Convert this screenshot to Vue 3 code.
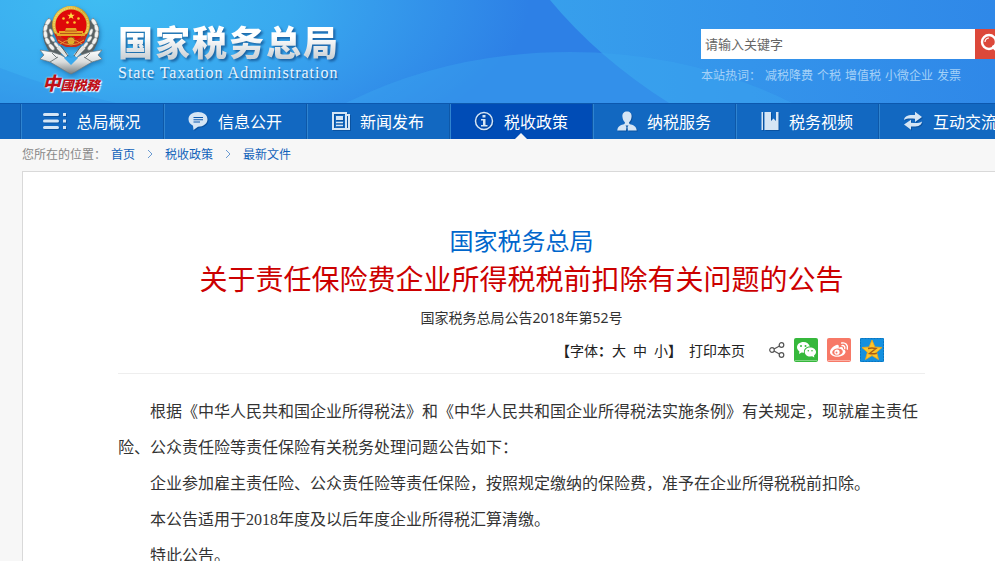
<script setup>
const navItems = [
  { label: '总局概况', icon: 'list' },
  { label: '信息公开', icon: 'chat' },
  { label: '新闻发布', icon: 'news' },
  { label: '税收政策', icon: 'info', active: true },
  { label: '纳税服务', icon: 'user' },
  { label: '税务视频', icon: 'book' },
  { label: '互动交流', icon: 'sync' },
]
const hotWords = ['减税降费', '个税', '增值税', '小微企业', '发票']
const crumbs = ['首页', '税收政策', '最新文件']
const sizes = ['大', '中', '小']
const paragraphs = [
  '根据《中华人民共和国企业所得税法》和《中华人民共和国企业所得税法实施条例》有关规定，现就雇主责任险、公众责任险等责任保险有关税务处理问题公告如下：',
  '企业参加雇主责任险、公众责任险等责任保险，按照规定缴纳的保险费，准予在企业所得税税前扣除。',
  '本公告适用于2018年度及以后年度企业所得税汇算清缴。',
  '特此公告。',
]
</script>

<template>
  <div class="page">
    <header class="banner">
      <svg class="waves" viewBox="0 0 995 103" preserveAspectRatio="none" aria-hidden="true">
        <defs>
          <linearGradient id="right" x1="0" y1="0" x2="1" y2="0">
            <stop offset="0" stop-color="#379fec" />
            <stop offset=".45" stop-color="#3494eb" />
            <stop offset="1" stop-color="#2f88e8" />
          </linearGradient>
        </defs>
        <path d="M550 0Q598 58 669 103H995V0Z" fill="url(#right)" />
        <path d="M350 101Q450 52 570 52Q690 52 792 103H346Z" fill="#3ba8f0" fill-opacity=".4" />
        <path d="M0 68Q60 91 116 103H0Z" fill="#2c86e5" fill-opacity=".25" />
      </svg>
      <a class="brand" href="#">
        <span class="badge">
          <svg class="emblem" width="66" height="70" viewBox="0 0 66 70" aria-hidden="true">
            <defs>
              <linearGradient id="silver" x1="0" y1="0" x2="0" y2="1">
                <stop offset="0" stop-color="#fff" />
                <stop offset=".5" stop-color="#d9dcdc" />
                <stop offset="1" stop-color="#777e80" />
              </linearGradient>
              <linearGradient id="gold" x1="0" y1="0" x2="1" y2="1">
                <stop offset="0" stop-color="#f7df65" />
                <stop offset=".5" stop-color="#d3a62f" />
                <stop offset="1" stop-color="#f0ce4c" />
              </linearGradient>
            </defs>
            <path d="M14 16C6 24 8 38 21 51M52 16C60 24 58 38 45 51" fill="none" stroke="#596264" stroke-width="9" />
            <g fill="#f3f3f0" stroke="#7b8486" stroke-width=".4">
              <ellipse cx="10" cy="17" rx="2" ry="3.800" transform="rotate(35 10 17)" />
              <ellipse cx="7.500" cy="23" rx="2" ry="3.800" transform="rotate(15 7.500 23)" />
              <ellipse cx="7.500" cy="29.500" rx="2" ry="3.800" transform="rotate(-8 7.500 29.500)" />
              <ellipse cx="9.500" cy="36" rx="2" ry="3.800" transform="rotate(-28 9.500 36)" />
              <ellipse cx="13.500" cy="42" rx="2" ry="3.800" transform="rotate(-40 13.500 42)" />
              <ellipse cx="13" cy="27" rx="1.600" ry="3.400" transform="rotate(-20 13 27)" />
              <ellipse cx="14.500" cy="34" rx="1.600" ry="3.400" transform="rotate(-35 14.500 34)" />
              <ellipse cx="18.500" cy="40" rx="1.600" ry="3.400" transform="rotate(-40 18.500 40)" />
              <ellipse cx="56" cy="17" rx="2" ry="3.800" transform="rotate(-35 56 17)" />
              <ellipse cx="58.500" cy="23" rx="2" ry="3.800" transform="rotate(-15 58.500 23)" />
              <ellipse cx="58.500" cy="29.500" rx="2" ry="3.800" transform="rotate(8 58.500 29.500)" />
              <ellipse cx="56.500" cy="36" rx="2" ry="3.800" transform="rotate(28 56.500 36)" />
              <ellipse cx="52.500" cy="42" rx="2" ry="3.800" transform="rotate(40 52.500 42)" />
              <ellipse cx="53" cy="27" rx="1.600" ry="3.400" transform="rotate(20 53 27)" />
              <ellipse cx="51.500" cy="34" rx="1.600" ry="3.400" transform="rotate(35 51.500 34)" />
              <ellipse cx="47.500" cy="40" rx="1.600" ry="3.400" transform="rotate(40 47.500 40)" />
            </g>
            <path d="M20 42L29 51M46 42L37 51" stroke="#e3e4e0" stroke-width="4" />
            <path d="M23 41L30 51M43 41L36 51" stroke="#555e60" stroke-width="1" />
            <path d="M2 45L14 47L23 50C27 52 30 55 33 59C36 55 39 52 43 50L52 47L64 45L60 50L64 54L54 57L37 67L33 69L29 67L12 57L2 54L6 50Z" fill="url(#silver)" stroke="#6e787b" stroke-width=".7" />
            <path d="M26 53Q30 51 33 53Q36 51 40 53L33 60Z" fill="#3aa9ed" />
            <path d="M12 57L20 52M54 57L46 52M14 48L19 53M52 48L47 53" stroke="#777f80" />
            <circle cx="33" cy="20" r="19" fill="#ad842c" />
            <circle cx="33" cy="19.500" r="18.500" fill="url(#gold)" />
            <circle cx="33" cy="20" r="17" fill="none" stroke="#f9e77d" stroke-dasharray="1 1.500" />
            <path d="M16 28Q33 39 50 28L46 38L38 42H28L20 38Z" fill="#c72b18" />
            <circle cx="33" cy="20" r="15.500" fill="#df0909" />
            <circle cx="33" cy="36" r="4" fill="#e0af2b" stroke="#9b581b" />
            <path d="M20 35Q33 45 46 35M22 39Q33 31 44 39" fill="none" stroke="#ec9935" />
            <path d="M33 7L34 9.700H36.700L34.600 11.500L35.500 14L33 12.500L30.500 14L31.400 11.500L29.300 9.700H32Z" fill="#ffdd42" />
            <circle cx="25.500" cy="13.500" r="1.300" fill="#ffc832" />
            <circle cx="40.500" cy="13.500" r="1.300" fill="#ffc832" />
            <circle cx="29.500" cy="17.500" r="1.300" fill="#ffc832" />
            <circle cx="36.500" cy="17.500" r="1.300" fill="#ffc832" />
            <path d="M28 23H38L39 26H45V28H47V31H19V28H21V26H27Z" fill="#e9a526" />
            <path d="M27 26H39M22 28.500H44" stroke="#b9501a" />
          </svg>
          <span class="script"><b>中</b>國税務</span>
        </span>
        <span class="names">
          <span class="name-cn">国家税务总局</span>
          <span class="name-en">State Taxation Administration</span>
        </span>
      </a>
      <div class="search">
        <form class="search-form" @submit.prevent>
          <input class="search-input" type="text" placeholder="请输入关键字" aria-label="请输入关键字" />
          <button class="search-button" type="submit" aria-label="搜索">
            <svg width="24" height="24" viewBox="0 0 24 24" fill="none" stroke="#fff">
              <circle cx="9" cy="9" r="7" stroke-width="2.4" />
              <path d="M14 14L20 20" stroke-width="4" stroke-linecap="round" />
              <path d="M5 9A4 4 0 0 1 9 5" stroke-width="1.2" />
            </svg>
          </button>
        </form>
        <p class="hot">
          <span>本站热词：</span>
          <a v-for="word in hotWords" :key="word" href="#">{{ word }}</a>
        </p>
      </div>
    </header>

    <nav class="nav">
      <a v-for="item in navItems" :key="item.label" href="#" class="nav-item" :class="{ active: item.active }">
        <svg v-if="item.icon === 'list'" class="icon" width="23" height="20" viewBox="0 0 23 20">
          <path d="M1.500 3.500H14.500M1.500 10H14.500M1.500 16.500H14.500" stroke="currentColor" stroke-width="3" stroke-linecap="round" />
          <path d="M20 2h3v3h-3zM20 8.500h3v3h-3zM20 15h3v3h-3z" fill="currentColor" />
        </svg>
        <svg v-else-if="item.icon === 'chat'" class="icon" width="20" height="20" viewBox="0 0 20 20">
          <path d="M10 1C4.500 1 .5 4 .5 8.300C.5 11.500 2.500 13.500 5 14.700L5.500 19L10 15.800C15.500 15.800 19.500 12.500 19.500 8.300C19.500 4 15.500 1 10 1Z" fill="currentColor" />
          <path d="M5.500 6.500H15M5.500 8.800H15M5.500 11H12" stroke="#0c58ad" stroke-width="1.100" />
        </svg>
        <svg v-else-if="item.icon === 'news'" class="icon" width="18" height="20" viewBox="0 0 18 20" fill="none" stroke="currentColor">
          <path d="M1 2H14V18H1ZM14 4H17V18H12" stroke-width="2" />
          <path d="M4 5H11V9H4Z" fill="currentColor" stroke="none" />
          <path d="M4 11.500H11M4 14.500H11" stroke-width="1.300" />
        </svg>
        <svg v-else-if="item.icon === 'info'" class="icon" width="20" height="20" viewBox="0 0 20 20">
          <circle cx="10" cy="10" r="8.500" fill="none" stroke="currentColor" stroke-width="1.500" />
          <path d="M8.500 4H11.500V6.500H8.500ZM7 8H11.500V14H13.500V15.500H7V14H9V9.500H7Z" fill="currentColor" />
        </svg>
        <svg v-else-if="item.icon === 'user'" class="icon" width="20" height="20" viewBox="0 0 20 20">
          <path d="M10 .5C7 .5 5.200 2.500 5.400 5.500C5.600 8 6.500 10 8 11.500L7.500 13C4 14 .5 15 .3 19.500H9L9.500 16L8.500 14.500H11.500L10.500 16L11 19.500H19.700C19.500 15 16 14 12.500 13L12 11.500C13.500 10 14.400 8 14.600 5.500C14.800 2.500 13 .5 10 .5Z" fill="currentColor" />
        </svg>
        <svg v-else-if="item.icon === 'book'" class="icon" width="18" height="20" viewBox="0 0 18 20">
          <path d="M.5 1H2V19H.5ZM3.500 1H10V10L12.500 7.500L15 10V1H17.500V19H3.500Z" fill="currentColor" />
        </svg>
        <svg v-else class="icon" width="20" height="20" viewBox="0 0 20 20">
          <path d="M1 9C1.500 5 5 3.500 12 4V.8L19 6L12 11V7.700C7 7.200 3.500 7.300 1 9Z" fill="currentColor" />
          <path d="M19 10.500C18.500 14.500 15 16 8 15.500V18.700L1 13.500L8 8.800V11.800C13 12.300 16.500 12.200 19 10.500Z" fill="currentColor" />
        </svg>
        <span>{{ item.label }}</span>
      </a>
    </nav>

    <div class="crumbs">
      <span>您所在的位置：</span>
      <template v-for="(crumb, i) in crumbs" :key="crumb">
        <svg v-if="i" width="6" height="10" viewBox="0 0 6 10" fill="none" stroke="#6b9bd2">
          <path d="M1 1L5 5L1 9" />
        </svg>
        <a href="#">{{ crumb }}</a>
      </template>
    </div>

    <main class="panel">
      <article>
        <h2 class="issuer">国家税务总局</h2>
        <h1 class="title">关于责任保险费企业所得税税前扣除有关问题的公告</h1>
        <p class="number">国家税务总局公告2018年第52号</p>
        <div class="tools">
          <span class="sizes">
            <span><b>【</b>字体<b>：</b></span>
            <button v-for="size in sizes" :key="size" type="button">{{ size }}</button>
            <b>】</b>
          </span>
          <button class="print" type="button">打印本页</button>
          <span class="share">
            <svg width="16" height="16" viewBox="0 0 16 16" fill="none" stroke="#555" stroke-width="1.200">
              <circle cx="3" cy="8" r="2.300" /><circle cx="12.500" cy="3" r="2.300" /><circle cx="12.500" cy="13" r="2.300" />
              <path d="M5 7L10.500 4M5 9L10.500 12" />
            </svg>
            <a href="#" aria-label="微信">
              <svg width="24" height="24" viewBox="0 0 24 24">
                <rect width="24" height="24" rx="2" fill="#36b83c" />
                <path d="M1 22.500H23" stroke="#7ed481" />
                <path d="M9.500 4C5.700 4 3 6.300 3 9.300C3 11 3.900 12.500 5.400 13.500L5 16L7.600 14.500L10 14.700C9.500 11 12.500 8.500 15.800 8.600C15.200 5.800 12.700 4 9.500 4Z" fill="#fff" />
                <path d="M16 9.500C13 9.500 10.800 11.500 10.800 14C10.800 16.600 13 18.600 16 18.600L18.200 18.200L20.300 19.500L20 17.500C21.200 16.700 22 15.400 22 14C22 11.500 19.500 9.500 16 9.500Z" fill="#fff" />
                <g fill="#36b83c"><circle cx="7" cy="8" r="1" /><circle cx="11.500" cy="8" r="1" /><circle cx="14.300" cy="12.700" r=".8" /><circle cx="18" cy="12.700" r=".8" /></g>
              </svg>
            </a>
            <a href="#" aria-label="微博">
              <svg width="24" height="24" viewBox="0 0 24 24">
                <rect width="24" height="24" rx="2" fill="#f77967" />
                <path d="M1 22.500H23" stroke="#fbb0a5" />
                <path d="M9.500 7C6 8 3 11.500 3 14.300C3 17 6.500 18.800 10.300 18.800C15 18.800 18.500 16.300 18.500 13.800C18.500 12.300 17.400 11.600 16 11.300C16.500 9 14.500 8.400 11.700 9.700C12.300 7.500 11.300 6.500 9.500 7Z" fill="#fff" />
                <ellipse cx="10.500" cy="14" rx="5.300" ry="3.500" fill="#f77967" transform="rotate(-8 10.500 14)" />
                <circle cx="10" cy="14.200" r="2.600" fill="#fff" /><circle cx="9.500" cy="14.600" r="1" fill="#f77967" />
                <path d="M15 7.600C17 7.300 18.200 8.500 17.700 10.500M14.700 5C18.500 4.200 21.300 7 20.300 11" fill="none" stroke="#fff" stroke-width="1.400" stroke-linecap="round" />
              </svg>
            </a>
            <a href="#" aria-label="QQ空间">
              <svg width="24" height="24" viewBox="0 0 24 24">
                <rect width="24" height="24" rx="1" fill="#1590df" />
                <rect x=".5" y=".5" width="23" height="23" rx="1" fill="none" stroke="#0875bf" stroke-dasharray="2 1" />
                <path d="M12 2L14.900 9L22 9.500L16.600 14.200L18.500 21.500L12 17.600L5.500 21.500L7.400 14.200L2 9.500L9.100 9Z" fill="#fec62a" stroke="#f6a712" stroke-width=".8" />
                <path d="M8 10.500Q12 9.700 16 10.500L9.500 15.500Q13 16.300 16.800 15.300" fill="none" stroke="#a85d16" stroke-width="1.500" />
              </svg>
            </a>
          </span>
        </div>
        <div class="body">
          <p v-for="text in paragraphs" :key="text">{{ text }}</p>
        </div>
      </article>
    </main>
  </div>
</template>

<style>
body {
  background: #f7f7f7;
}
html {
  scrollbar-width: none;
}
</style>

<style scoped>
.page {
  overflow: hidden;
  font-family: "Noto Sans", "Noto Sans CJK SC", sans-serif;
  font-size: 12px;
  text-spacing-trim: space-all;
  color: #333;
}
a {
  color: inherit;
  text-decoration: none;
}
button {
  border: 0;
  padding: 0;
  background: none;
  color: inherit;
  font: inherit;
  cursor: pointer;
}
svg {
  display: block;
  flex: none;
}
h1,
h2,
p {
  margin: 0;
  font-weight: normal;
}
.banner {
  position: relative;
  display: flex;
  justify-content: space-between;
  height: 103px;
  overflow: hidden;
  background:
    radial-gradient(ellipse 430px 190px at 100px 0, #3fbcf2 0%, #39a9ef 45%, rgba(45, 128, 230, 0) 100%),
    #2d80e6;
}
.waves {
  position: absolute;
  inset: 0;
  width: 100%;
  height: 100%;
}
.brand {
  position: relative;
  display: flex;
  gap: 14px;
  padding: 5px 0 0 38px;
}
.badge {
  display: flex;
  flex-direction: column;
  align-items: center;
}
.emblem {
  filter: drop-shadow(1px 2px 2px rgba(0, 50, 110, 0.4));
}
.script {
  font-size: 13px;
  font-style: italic;
  font-weight: 900;
  line-height: 16px;
  white-space: nowrap;
  color: #c00d16;
  text-shadow: 0 0 2px #fff, 1px 1px 1px #fff;
}
.script b {
  font-size: 18px;
}
.names {
  display: flex;
  flex-direction: column;
  padding-top: 17px;
}
.name-cn {
  font-size: 35px;
  font-weight: 900;
  line-height: 42px;
  letter-spacing: 2px;
  color: transparent;
  background: linear-gradient(#fff 35%, #cdd2d6 85%);
  -webkit-background-clip: text;
  background-clip: text;
  filter: drop-shadow(2px 2px 1px rgba(10, 60, 120, 0.6));
}
.name-en {
  font-family: "Liberation Serif", serif;
  font-size: 16px;
  line-height: 18px;
  letter-spacing: 1px;
  color: #e8f3fc;
  text-shadow: 1px 2px 1px rgba(10, 60, 120, 0.6);
}
.search {
  position: relative;
  flex: 0 0 294px;
  min-width: 0;
  padding-top: 29px;
}
.search-form {
  display: flex;
  height: 30px;
}
.search-input {
  flex: 0 0 274px;
  box-sizing: border-box;
  border: 0;
  padding: 0 4px 2px;
  border-radius: 0;
  background: #fff;
  font: 13px "Noto Sans CJK SC", sans-serif;
  outline: 0;
}
.search-input::placeholder {
  color: #666;
}
.search-button {
  flex: 0 0 40px;
  padding: 4px 5px;
  background: #dc483a;
}
.hot {
  display: flex;
  gap: 4px;
  padding-top: 8px;
  line-height: 18px;
  white-space: nowrap;
  color: #a4d1f8;
}
.nav {
  display: flex;
  height: 36px;
  box-sizing: border-box;
  padding-left: 21px;
  overflow: hidden;
  border-top: 1px solid #0c58ae;
  background: #1268c1;
}
.nav-item {
  position: relative;
  display: flex;
  flex: 0 0 143px;
  box-sizing: border-box;
  align-items: center;
  justify-content: center;
  gap: 10px;
  padding: 0 2px 2px 0;
  border-left: 1px solid #2f84d0;
  box-shadow: -1px 0 #0e58a8;
  font-size: 16px;
  white-space: nowrap;
  color: #fff;
}
.nav-item .icon {
  color: #d5e5f5;
  filter: drop-shadow(1px 1px 0 rgba(0, 50, 110, 0.4));
}
.nav-item.active {
  background: #004cb6;
}
.nav-item.active::after {
  content: "";
  position: absolute;
  bottom: 0;
  left: 50%;
  margin-left: -7px;
  border: 6px solid transparent;
  border-top: 0;
  border-bottom-color: #f7f7f7;
}
.crumbs {
  display: flex;
  box-sizing: border-box;
  align-items: center;
  gap: 12px;
  height: 32px;
  padding: 0 0 2px 22px;
  color: #888;
}
.crumbs > span {
  margin-right: -7px;
}
.crumbs a {
  color: #1263bb;
}
.panel {
  margin-left: 22px;
  padding: 50px 70px 60px 95px;
  border: 1px solid #d9d9d9;
  border-right: 0;
  background: #fff;
}
.issuer {
  font-size: 24px;
  line-height: 38px;
  text-align: center;
  color: #0066cc;
}
.title {
  font-size: 28px;
  line-height: 38px;
  text-align: center;
  white-space: nowrap;
  color: #cc0000;
}
.number {
  font-size: 14px;
  line-height: 40px;
  text-align: center;
}
.tools {
  display: flex;
  box-sizing: border-box;
  align-items: center;
  justify-content: flex-end;
  height: 36px;
  padding: 0 41px 12px 0;
  border-bottom: 1px solid #eee;
  font-size: 14px;
  color: #222;
}
.sizes {
  display: flex;
}
.sizes button + button {
  margin-left: 7px;
}
.print {
  margin-left: 7px;
}
.share {
  display: flex;
  align-items: center;
  gap: 9px;
  margin-left: 24px;
}
.body {
  padding-top: 20px;
  font-family: "Liberation Serif", "Noto Sans CJK SC", serif;
  font-size: 16px;
  font-weight: 300;
  line-height: 36px;
}
.body p {
  text-indent: 32px;
}
</style>
